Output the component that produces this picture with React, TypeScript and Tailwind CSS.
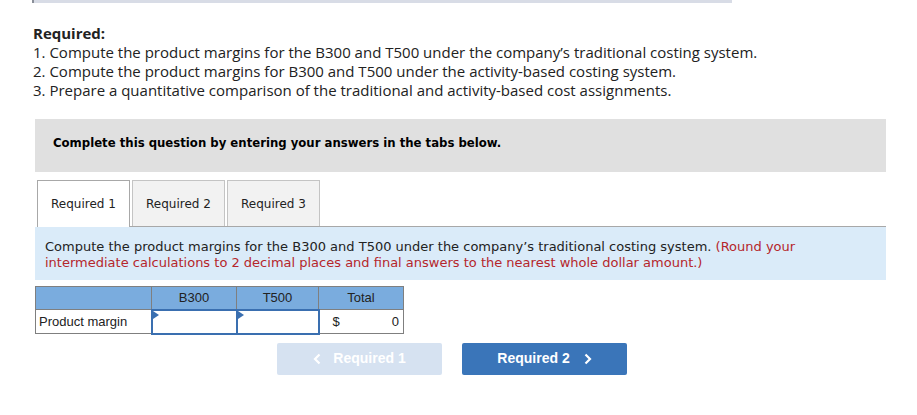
import React from "react";

export default function App() {
  return (
    <div className="relative w-[917px] h-[415px] bg-white overflow-hidden">
      <div className="ml-[32px] w-[700px] h-[3px] bg-[#d8dce6] border-l-2 border-[#8a8f99]" />
      <div className="ml-[33px] mt-[21px] text-[15px] leading-[19px] text-[#222]" style={{ fontFamily: "'Open Sans', Lato, sans-serif" }}>
        <div className="font-bold">Required:</div>
        <div>1. Compute the product margins for the B300 and T500 under the company’s traditional costing system.</div>
        <div>2. Compute the product margins for B300 and T500 under the activity-based costing system.</div>
        <div>3. Prepare a quantitative comparison of the traditional and activity-based cost assignments.</div>
      </div>
      <div className="ml-[35px] mt-[19px] w-[851px] h-[53px] bg-[#e0e0e0] flex items-start pt-[14px] pl-[18px] text-[13px] font-bold text-black" style={{ fontFamily: "'DejaVu Sans Condensed', 'DejaVu Sans', Verdana, sans-serif" }}>
        Complete this question by entering your answers in the tabs below.
      </div>
      <div className="ml-[37px] mt-[8px] flex items-end h-[47px] w-[849px] border-b border-[#a8a8a8]" style={{ fontFamily: "'DejaVu Sans', Verdana, sans-serif" }}>
        <div className="w-[93px] h-[47px] -mb-px bg-white border border-b-0 border-[#a8a8a8] flex items-center justify-center text-[12px] text-[#222]">Required 1</div>
        <div className="ml-[2px] w-[93px] h-[46px] bg-[#f2f2f2] border border-b-0 border-[#c4c4c4] flex items-center justify-center text-[12px] text-[#222]">Required 2</div>
        <div className="ml-[2px] w-[93px] h-[46px] bg-[#f2f2f2] border border-b-0 border-[#c4c4c4] flex items-center justify-center text-[12px] text-[#222]">Required 3</div>
      </div>
      <div className="ml-[35px] w-[851px] h-[53px] bg-[#daebf9] pl-[10px] pt-[12px] text-[13px] leading-[16px] text-[#222]" style={{ fontFamily: "'DejaVu Sans', Verdana, sans-serif" }}>
        Compute the product margins for the B300 and T500 under the company’s traditional costing system. <span className="text-[#b5262b]">(Round your<br />intermediate calculations to 2 decimal places and final answers to the nearest whole dollar amount.)</span>
      </div>
      <table className="ml-[35px] mt-[6px] border-collapse text-[13px] text-[#222]" style={{ fontFamily: "'Liberation Sans', Arial, sans-serif" }}>
        <thead>
          <tr className="bg-[#7aacde] h-[23px]">
            <th className="w-[116px] border border-[#7f7f7f] font-normal"></th>
            <th className="w-[85px] border border-[#7f7f7f] font-normal">B300</th>
            <th className="w-[82px] border border-[#7f7f7f] font-normal">T500</th>
            <th className="w-[85px] border border-[#7f7f7f] font-normal">Total</th>
          </tr>
        </thead>
        <tbody>
          <tr className="h-[24px]">
            <td className="border border-[#7f7f7f] pl-[3px] text-left">Product margin</td>
            <td className="border-2 border-[#3a6fb0] relative p-0">
              <span className="absolute left-0 top-0 w-0 h-0 border-t-[4px] border-b-[4px] border-l-[6px] border-t-transparent border-b-transparent border-l-[#3a6fb0]" />
            </td>
            <td className="border-2 border-[#3a6fb0] relative p-0">
              <span className="absolute left-0 top-0 w-0 h-0 border-t-[4px] border-b-[4px] border-l-[6px] border-t-transparent border-b-transparent border-l-[#3a6fb0]" />
            </td>
            <td className="border border-[#7f7f7f] px-[4px]">
              <div className="flex justify-between pl-[9px]"><span>$</span><span>0</span></div>
            </td>
          </tr>
        </tbody>
      </table>
      <div className="ml-[277px] mt-[8px] flex gap-[20px] text-[14px] font-bold text-white" style={{ fontFamily: "'Liberation Sans', Arial, sans-serif" }}>
        <div className="w-[165px] h-[32px] rounded-[2px] bg-[#d6e2f1] flex items-center justify-center gap-[12px]">
          <svg width="8" height="12" viewBox="0 0 8 12"><path d="M6.5 1.5 2 6l4.5 4.5" fill="none" stroke="white" strokeWidth="2.2" /></svg>
          <span>Required 1</span>
        </div>
        <div className="w-[165px] h-[32px] rounded-[2px] bg-[#3a75b9] flex items-center justify-center gap-[14px]">
          <span>Required 2</span>
          <svg width="8" height="12" viewBox="0 0 8 12"><path d="M1.5 1.5 6 6l-4.5 4.5" fill="none" stroke="white" strokeWidth="2.2" /></svg>
        </div>
      </div>
    </div>
  );
}
